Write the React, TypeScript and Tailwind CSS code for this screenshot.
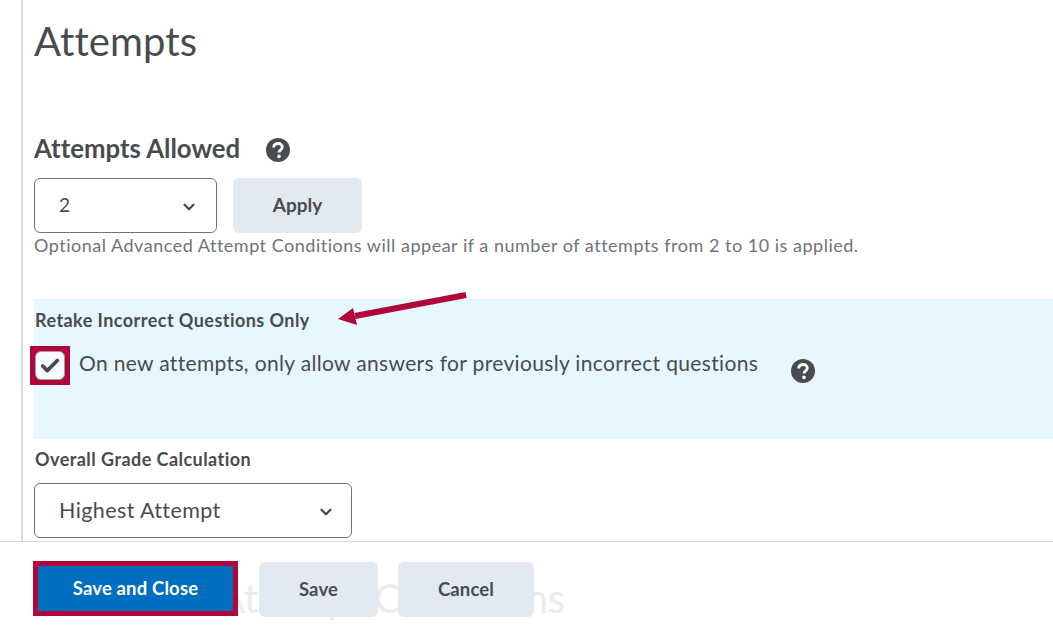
import { Check, ChevronDown } from "lucide-react";

function HelpIcon() {
  return (
    <svg width="24" height="24" viewBox="0 0 24 24" aria-hidden="true">
      <circle cx="12" cy="12" r="12" fill="#494c4e" />
      <path
        d="M7.6 9.6c0-2.5 1.9-4.1 4.5-4.1 2.4 0 4.2 1.5 4.2 3.6 0 1.6-.9 2.5-2 3.2-.9.6-1.3 1.1-1.3 2.1"
        fill="none"
        stroke="#fff"
        strokeWidth="2.8"
      />
      <circle cx="13" cy="18.4" r="1.8" fill="#fff" />
    </svg>
  );
}

function Select({ value, className }: { value: string; className: string }) {
  return (
    <div
      className={`flex h-[55px] items-center justify-between rounded-md border border-[#6e7477] bg-white text-[#494c4e] ${className}`}
    >
      <span>{value}</span>
      <ChevronDown className="mt-[2px] h-[18px] w-[18px]" strokeWidth={3} />
    </div>
  );
}

export default function App() {
  return (
    <div className="relative h-[625px] w-[1053px] overflow-hidden bg-white font-['Lato',sans-serif] text-[#494c4e] [font-variant-ligatures:none]">
      <div className="ml-[21px] h-full border-l-2 border-[#d3d9dd] pl-[11px]">
        <h1 className="pt-[16px] text-[40px] leading-[50px] font-normal tracking-[0.1px]">Attempts</h1>

        <div className="mt-[65px] flex items-center">
          <h2 className="text-[25.75px] leading-[34px] font-bold">Attempts Allowed</h2>
          <span className="mt-[4px] ml-[26px]">
            <HelpIcon />
          </span>
        </div>

        <div className="mt-[13px] flex gap-4">
          <Select value="2" className="w-[183px] pr-[18px] pl-[24px] text-[19px]" />
          <button className="h-[55px] w-[129px] rounded-md bg-[#e3e9f1] text-[19px] font-bold">Apply</button>
        </div>
        <p className="text-[18px] leading-[24px] tracking-[0.51px] text-[#6e7477]">
          Optional Advanced Attempt Conditions will appear if a number of attempts from 2 to 10 is applied.
        </p>

        <section className="mt-[42px] h-[140px] bg-[#e6f7ff] pt-[8px]">
          <h3 className="pl-px text-[18px] leading-[26px] font-bold tracking-[0.45px]">Retake Incorrect Questions Only</h3>
          <div className="mt-[13px] flex items-start">
            <span className="-ml-[4px] flex h-[39px] w-[40px] shrink-0 items-center justify-center border-[5px] border-[#b0063c] bg-[#b0063c]">
              <span className="flex h-[29px] w-[30px] items-center justify-center rounded-md border border-[#9aa0a4] bg-[#f9fbff]">
                <Check className="h-[22px] w-[22px]" strokeWidth={4} />
              </span>
            </span>
            <span className="mt-[3px] ml-[9px] text-[21px] leading-[27px] tracking-[0.34px]">
              On new attempts, only allow answers for previously incorrect questions
            </span>
            <span className="mt-[13px] ml-[33px]">
              <HelpIcon />
            </span>
          </div>
        </section>

        <h3 className="mt-[7px] pl-px text-[18px] leading-[26px] font-bold tracking-[0.45px]">Overall Grade Calculation</h3>
        <Select value="Highest Attempt" className="mt-[11px] w-[318px] pr-[16px] pl-[24px] text-[21.5px] tracking-[0.4px]" />
      </div>

      {/* sticky footer, the next heading shows faintly through it */}
      <div className="absolute inset-x-0 bottom-0 h-[84px] border-t border-[#d3d9dd] bg-white">
        <div className="absolute top-[31px] left-[34px] whitespace-nowrap text-[40.3px] leading-[50px] text-[#ececed]">
          Advanced Attempt Conditions
        </div>
        <div className="relative flex gap-5 pt-[20px] pl-[34px] text-[18.5px] font-bold tracking-[0.15px]">
          <button className="-mt-px -ml-px h-[55px] w-[205px] border-[5px] border-[#b0063c] bg-[#006fbf] text-white">
            Save and Close
          </button>
          <button className="ml-px h-[55px] w-[119px] rounded-md bg-[#e3e9f1]">Save</button>
          <button className="h-[55px] w-[136px] rounded-md bg-[#e3e9f1]">Cancel</button>
        </div>
      </div>

      {/* annotation arrow */}
      <svg className="absolute top-[290px] left-[335px]" width="136" height="38" viewBox="0 0 136 38" aria-hidden="true">
        <path d="M131 5 L20 26" stroke="#b0063c" strokeWidth="6" fill="none" />
        <path d="M3 29 L18 18 L22 35 Z" fill="#b0063c" />
      </svg>
    </div>
  );
}
